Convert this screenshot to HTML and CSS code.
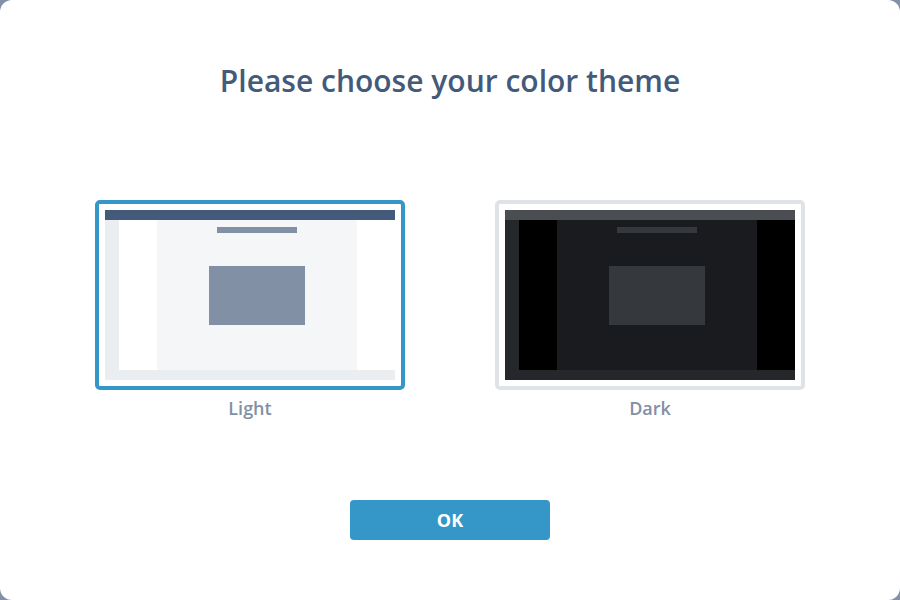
FILE: index.html
```html
<!DOCTYPE html>
<html>
<head>
<meta charset="utf-8">
<link rel="stylesheet" href="styles.css">
</head>
<body>
<div class="dialog">
  <h1 class="title">Please choose your color theme</h1>
  <div class="options">
    <div class="option">
      <div class="preview preview--light preview--selected">
        <div class="mock">
          <div class="mock-top"></div>
          <div class="mock-body">
            <div class="mock-rail"></div>
            <div class="mock-side"></div>
            <div class="mock-main">
              <div class="mock-heading"></div>
              <div class="mock-block"></div>
            </div>
            <div class="mock-side mock-side--right"></div>
          </div>
          <div class="mock-bottom"></div>
        </div>
      </div>
      <div class="label">Light</div>
    </div>
    <div class="option">
      <div class="preview preview--dark">
        <div class="mock">
          <div class="mock-top"></div>
          <div class="mock-body">
            <div class="mock-rail"></div>
            <div class="mock-side"></div>
            <div class="mock-main">
              <div class="mock-heading"></div>
              <div class="mock-block"></div>
            </div>
            <div class="mock-side mock-side--right"></div>
          </div>
          <div class="mock-bottom"></div>
        </div>
      </div>
      <div class="label">Dark</div>
    </div>
  </div>
  <button class="ok">OK</button>
</div>
</body>
</html>
```
FILE: styles.css
```css
html, body {
  margin: 0;
  padding: 0;
  background: #8391a6;
}
body {
  width: 900px;
  height: 600px;
  font-family: "Open Sans", "Noto Sans", sans-serif;
}
.dialog {
  width: 900px;
  height: 600px;
  background: #ffffff;
  border-radius: 12px;
  display: flex;
  flex-direction: column;
  align-items: center;
  box-sizing: border-box;
  padding-top: 61px;
}
.title {
  margin: 0;
  font-size: 30px;
  line-height: 40px;
  font-weight: 600;
  color: #435a7a;
}
.options {
  display: flex;
  gap: 90px;
  margin-top: 99px;
}
.option {
  display: flex;
  flex-direction: column;
  align-items: center;
}
.preview {
  width: 310px;
  height: 190px;
  box-sizing: border-box;
  border: 4px solid #dfe3e7;
  border-radius: 5px;
  padding: 6px;
  background: #ffffff;
}
.preview--selected {
  border-color: #3497c8;
}
.mock {
  width: 290px;
  height: 170px;
  display: flex;
  flex-direction: column;
}
.mock-top {
  height: 10px;
}
.mock-body {
  height: 150px;
  display: flex;
}
.mock-bottom {
  height: 10px;
}
.mock-rail {
  width: 14px;
}
.mock-side {
  width: 38px;
}
.mock-main {
  width: 200px;
  display: flex;
  flex-direction: column;
  align-items: center;
}
.mock-heading {
  width: 80px;
  height: 6px;
  margin-top: 7px;
}
.mock-block {
  width: 96px;
  height: 59px;
  margin-top: 33px;
}

.preview--light .mock-top { background: #435a7a; }
.preview--light .mock-rail,
.preview--light .mock-bottom { background: #ebeef1; }
.preview--light .mock-side { background: #ffffff; }
.preview--light .mock-main { background: #f4f6f8; }
.preview--light .mock-heading,
.preview--light .mock-block { background: #8190a5; }

.preview--dark .mock-top { background: #4a4d52; }
.preview--dark .mock-rail,
.preview--dark .mock-bottom { background: #25272b; }
.preview--dark .mock-side { background: #000000; }
.preview--dark .mock-main { background: #1a1b1e; }
.preview--dark .mock-heading,
.preview--dark .mock-block { background: #35383d; }

.label {
  margin-top: 6px;
  font-size: 18px;
  line-height: 24px;
  font-weight: 600;
  color: #8190a5;
}
.ok {
  margin-top: 80px;
  width: 200px;
  height: 40px;
  border: none;
  border-radius: 4px;
  background: #3497c8;
  color: #ffffff;
  font-family: "Open Sans", "Noto Sans", sans-serif;
  font-size: 18px;
  font-weight: 700;
  padding: 0;
}
```
